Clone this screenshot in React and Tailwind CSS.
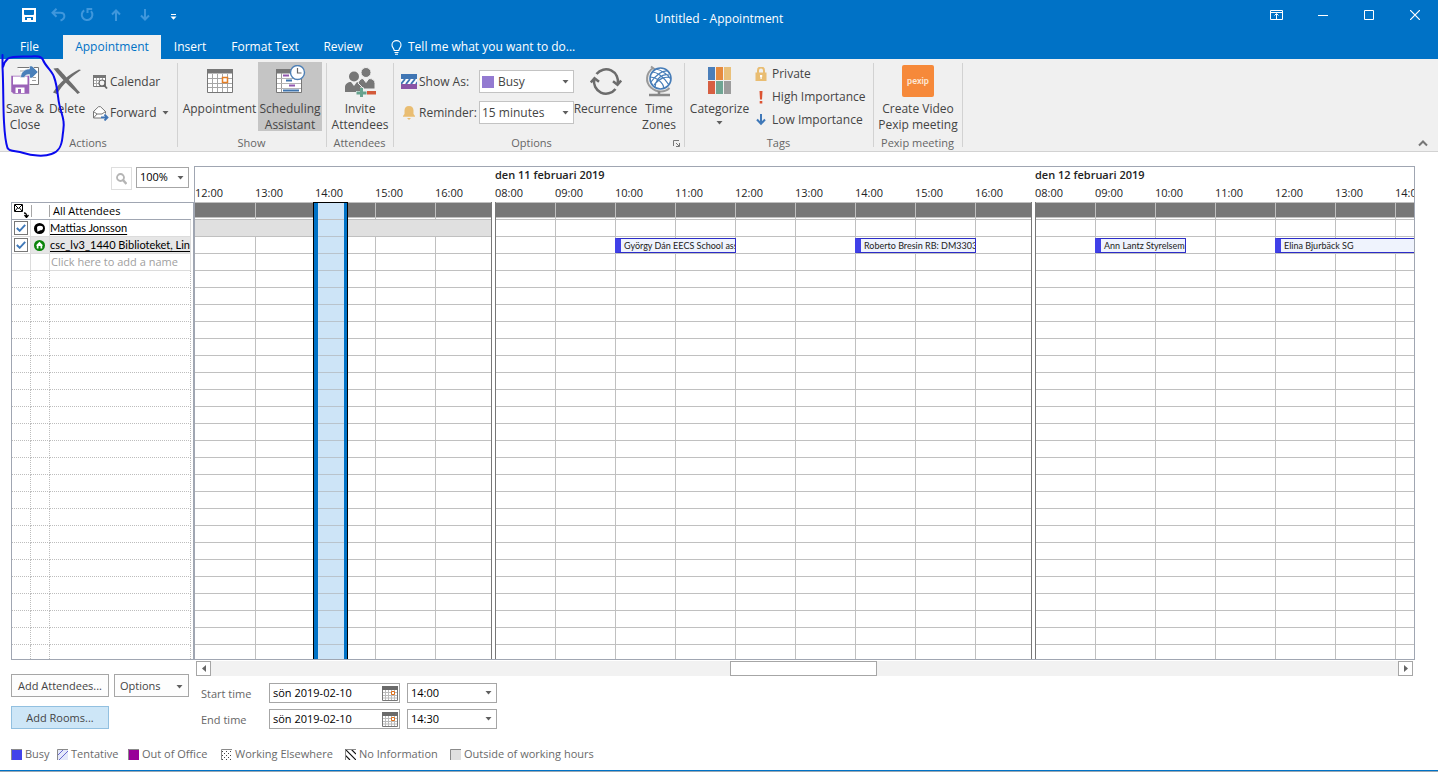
import { useState } from "react";

const HOUR_WIDTH = 60;
const ROWS = Array.from({ length: 26 }, (_, i) => i);

const days = [
  {
    label: "",
    hours: ["12:00", "13:00", "14:00", "15:00", "16:00"],
    offRow: 0,
    events: [],
  },
  {
    label: "den 11 februari 2019",
    hours: ["08:00", "09:00", "10:00", "11:00", "12:00", "13:00", "14:00", "15:00", "16:00"],
    events: [
      { title: "György Dán EECS School ass", start: 2, length: 2 },
      { title: "Roberto Bresin RB: DM3303", start: 6, length: 2 },
    ],
  },
  {
    label: "den 12 februari 2019",
    hours: ["08:00", "09:00", "10:00", "11:00", "12:00", "13:00", "14:00", "15:00", "16:00"],
    events: [
      { title: "Ann Lantz Styrelsem", start: 1, length: 1.5 },
      { title: "Elina Bjurbäck SG", start: 4, length: 4 },
    ],
  },
];

/* ------------------------------ Icons ------------------------------ */

const Caret = ({ className = "" }) => (
  <svg width="7" height="4" viewBox="0 0 7 4" className={className} aria-hidden="true">
    <path d="M0.5 0h6L3.5 3.5z" fill="#5f5f5f" />
  </svg>
);

const SaveIcon = () => (
  <svg width="14" height="14" viewBox="0 0 14 14" fill="#fff">
    <path fillRule="evenodd" d="M0 0h14v14H0zM2 2v4.5l1 .5h8l1-.5V2zM3 9v3h2v-2h4v2h2V9z" />
    <path d="M6 11h1.5v2H6z" />
  </svg>
);

const UndoIcon = () => (
  <svg width="15" height="14" viewBox="0 0 15 14" fill="none" stroke="#3f97dc" strokeWidth="2">
    <path d="M5.5 0.8 1.5 4.8l4 4M2 4.8h7.2c5.4 0 5.6 6 .3 7.7" />
  </svg>
);

const RedoIcon = () => (
  <svg width="14" height="14" viewBox="0 0 14 14" fill="none" stroke="#3f97dc" strokeWidth="2">
    <path d="M4.2 2.3A5.3 5.3 0 1 0 11 3.2M7.5 5V1h4.7" />
  </svg>
);

const ArrowIcon = ({ down }) => (
  <svg width="10" height="12" viewBox="0 0 10 12" fill="none" stroke="#3f97dc" strokeWidth="2">
    <path d={down ? "M5 0v10M1 6.5 5 10.5 9 6.5" : "M5 12V2M1 5.5 5 1.5 9 5.5"} />
  </svg>
);

const BulbIcon = () => (
  <svg width="11" height="15" viewBox="0 0 11 15" fill="none" stroke="#fff" strokeWidth="1.1">
    <path d="M3.2 10.5C3.2 8.5 1 7.500 1 4.900a4.500 4.300 0 0 1 9 0c0 2.600-2.200 3.600-2.200 5.600zM3.500 12.500h4M4 14.200h3" />
  </svg>
);

const SaveCloseIcon = () => (
  <svg width="32" height="32" viewBox="0 0 32 32">
    <path d="M8.500 2.500h21v17H20" fill="#fff" stroke="#777" />
    <path d="M11 6h5M23 12.500h4M23 15.500h4" stroke="#a0a0a0" />
    <path d="M2 10.500h18.500V29H4.500L2 26.500z" fill="#9b62b8" stroke="#f0f0f0" strokeWidth="0.500" />
    <path d="M4 11.500h14.500v8H4z" fill="#fff" />
    <path d="M6.500 22.500h9V28h-9z" fill="#fff" />
    <path d="M9 24h3v4H9z" fill="#9b62b8" />
    <path d="M11.500 12.500c.5-6 4.500-8.500 9-8.500V1H23l6 6-6 6h-2.500v-3.500c-3.500 0-4.500 1-5 3z" fill="#4a80ba" stroke="#f0f0f0" strokeWidth="0.6" />
  </svg>
);

const DeleteIcon = () => (
  <svg width="32" height="32" viewBox="0 0 32 32" fill="#6e6e6e">
    <path d="M2.500 3.500 7 3c5 5.500 9.500 10 22 24.500l-2.500 1.500C20 22 11 15 2.500 3.500z" />
    <path d="M30 5c-9 6-19 15-24 24L2 27.500C8 18 18 9 28 4.500z" />
  </svg>
);

const CalendarGrid = ({ x = 3, y = 4 }) => (
  <g transform={`translate(${x} ${y})`}>
    <path d="M.5.500h25v23H.500z" fill="#fff" stroke="#777" />
    <path d="M0 0h26v4.500H0z" fill="#777" />
    <path d="M5.500 5v18M10.500 5v18M15.500 5v18M20.500 5v18M1 9.500h24M1 14.500h24M1 18.500h24" stroke="#a6a6a6" />
  </g>
);

const AppointmentIcon = () => (
  <svg width="32" height="32" viewBox="0 0 32 32">
    <CalendarGrid />
    <path d="M18.500 12.500h5v5h-5z" fill="#fff" stroke="#e37e26" strokeWidth="1.500" />
  </svg>
);

const SchedulingIcon = () => (
  <svg width="32" height="32" viewBox="0 0 32 32">
    <path d="M2.500 4.500h25v23h-25z" fill="#fff" stroke="#777" />
    <path d="M2 4h26v4.500H2z" fill="#777" />
    <path d="M7.500 8v19" stroke="#999" />
    <path d="M3 13.500h24M3 18.500h24M3 23.500h24" stroke="#b4b4b4" />
    <path d="M9 10.500h6M15 20.500h6" stroke="#9157ae" strokeWidth="2" />
    <path d="M12 15.500h6M9 25.500h16" stroke="#3f74ad" strokeWidth="2" />
    <circle cx="23.500" cy="7.500" r="7" fill="#fff" stroke="#4e80b6" strokeWidth="1.400" />
    <path d="M23.500 3v5h4" fill="none" stroke="#666" strokeWidth="1.200" />
  </svg>
);

const SearchCalendarIcon = () => (
  <svg width="15" height="14" viewBox="0 0 15 14">
    <path d="M.5.500h12v11H.500z" fill="#fff" stroke="#777" />
    <path d="M0 0h13v3H0z" fill="#777" />
    <path d="M3.500 3v8M6.500 3v8M9.500 3v8M1 5.500h11M1 8.500h11" stroke="#aaa" />
    <circle cx="9" cy="8" r="3" fill="#f4f4f4" stroke="#666" strokeWidth="1.200" />
    <path d="m11 10 3 3.500" stroke="#666" strokeWidth="1.800" />
  </svg>
);

const ForwardIcon = () => (
  <svg width="16" height="15" viewBox="0 0 16 15">
    <path d="M.5 5.500 5.500.700h2l5 4.800V12H.500z" fill="#fff" stroke="#777" />
    <path d="m.5 5.500 3.500 2.500h5l3.500-2.500M.5 12l3.500-4" fill="none" stroke="#777" />
    <path d="M8 11.500h6M11.500 8.500l3 3-3 3" fill="none" stroke="#f0f0f0" strokeWidth="3.500" />
    <path d="M8 11.500h6M11.500 8.500l3 3-3 3" fill="none" stroke="#3f74b5" strokeWidth="1.800" />
  </svg>
);

const InviteIcon = () => (
  <svg width="32" height="32" viewBox="0 0 32 32">
    <circle cx="10" cy="11.500" r="5" fill="#777" />
    <path d="M1 27v-5c0-3 3-5 6-5l3 4 3-4c3 0 6 2 6 5v5z" fill="#777" />
    <circle cx="22" cy="7.500" r="5" fill="#777" stroke="#f0f0f0" />
    <path d="M14 18c1-3 3-4.500 5-4.500l3 4 3-4c4 0 6 2 6 5V24H20z" fill="#777" stroke="#f0f0f0" />
    <path d="M16 22.500h4V26h3.500v3.500H20V33h-4v-3.500h-4V26h4z" fill="#f0f0f0" />
    <path d="M16 23h3v3.500h3.500v3H19V32h-3v-2.500h-3.500v-3H16z" fill="#66a28e" />
    <path d="M23 26h9v3.500h-9z" fill="#d35a3a" />
  </svg>
);

const ShowAsIcon = () => (
  <svg width="16" height="15" viewBox="0 0 16 15">
    <path d="M0 0h16v5H0z" fill="#4076b4" />
    <path d="M0 5h16v5H0z" fill="#fff" />
    <path d="m0 10 4-5M5 10l4-5M10 10l4-5M15 10l4-5" stroke="#4076b4" strokeWidth="2" />
    <path d="M0 10h16v5H0z" fill="#8a54a5" />
  </svg>
);

const BellIcon = () => (
  <svg width="14" height="14" viewBox="0 0 14 14" fill="#e9bd72">
    <path d="M7 0c3 0 4.500 2 4.500 4.500V8l1.500 2v.800H1V10l1.500-2V4.500C2.500 2 4 0 7 0zM5 12h4l-2 2z" />
  </svg>
);

const RecurrenceIcon = () => (
  <svg width="32" height="32" viewBox="0 0 32 32" fill="none" stroke="#6c6c6c" strokeWidth="2.500">
    <path d="M25.500 24A12 12 0 0 1 4.300 14M6.500 9A12 12 0 0 1 27.700 19" />
    <path d="m.8 17.500 3.700-4.300 4.500 3.500M31.200 15.500l-3.700 4.300-4.500-3.500" />
  </svg>
);

const GlobeIcon = () => (
  <svg width="32" height="32" viewBox="0 0 32 32" fill="none">
    <path d="M10 3C3 8 2 17 8 22.500s14 5 18.500.500M8 1.500l4 3" stroke="#999" strokeWidth="2" />
    <path d="M16 26v3M6 30h21" stroke="#888" strokeWidth="2.500" />
    <circle cx="17.500" cy="13.500" r="10.500" fill="#fff" stroke="#477db8" strokeWidth="1.600" />
    <path d="M9 7c5 0 12 5 17 13M8 17C14 9 19 5 25 6M7 12c6 0 13 5 14 11.500M12 22c1-8 7-14 14-12M13 4c6 1 13 7 14.500 10M11 20c5-7 12-9 17-7" stroke="#477db8" strokeWidth="1.200" />
  </svg>
);

const CategorizeIcon = () => (
  <svg width="24" height="32" viewBox="0 0 24 32">
    <path d="M0 2h7v13H0z" fill="#4a7eb9" />
    <path d="M8 2h7v13H8z" fill="#e58a3e" />
    <path d="M16 2h7v13h-7z" fill="#e9c07a" />
    <path d="M0 16h7v13H0z" fill="#d65f42" />
    <path d="M8 16h7v13H8z" fill="#6fa593" />
    <path d="M16 16h7v13h-7z" fill="#9c9c9c" />
  </svg>
);

const LockIcon = () => (
  <svg width="12" height="14" viewBox="0 0 12 14">
    <path d="M3 6V3.500a3 3 0 0 1 6 0V6" fill="none" stroke="#e9bd72" strokeWidth="2" />
    <path d="M.5 5.500h11V14H.500z" fill="#e9bd72" />
    <path d="M5 8h2.200v1.800l-.5.500V12h-1.200v-1.700L5 9.800z" fill="#fff" />
  </svg>
);

const ExclamationIcon = () => (
  <svg width="12" height="13" viewBox="0 0 12 13" fill="#dc5332">
    <path d="M4.500 0h3L7 8.500H5zM4.700 10h2.600v2.500H4.700z" />
  </svg>
);

const LowIcon = () => (
  <svg width="12" height="12" viewBox="0 0 12 12" fill="none" stroke="#3f78b8" strokeWidth="2">
    <path d="M6 0v10M2 5.500 6 9.800l4-4.300" />
  </svg>
);

const PexipIcon = () => (
  <svg width="32" height="32" viewBox="0 0 32 32">
    <rect width="32" height="32" rx="2" fill="#f6893a" />
    <text x="16" y="18.500" textAnchor="middle" fontSize="9" fontWeight="600" fontFamily="Roboto, sans-serif" fill="#fde6d4">
      pexip
    </text>
  </svg>
);

const SmallCalendarIcon = () => (
  <svg width="16" height="15" viewBox="0 0 16 15">
    <path d="M.5.500h15v14H.500z" fill="#fff" stroke="#777" />
    <path d="M0 0h16v4H0z" fill="#6a6a6a" />
    <path d="M3.500 4v10M6.500 4v10M9.500 4v10M12.500 4v10M1 6.500h14M1 9.500h14M1 12h14" stroke="#bbb" />
    <path d="M9.500 5.500h3v3h-3z" fill="#fff" stroke="#e0701a" />
  </svg>
);

const EnvelopeIcon = () => (
  <svg width="15" height="14" viewBox="0 0 15 14" fill="none" stroke="#000">
    <path d="M.5.500h8v7h-8zM1 1l3.500 3.500L8 1M1 7l2.500-3M8 7 5.500 4" />
    <path d="M10 9c2 0 2.500.500 2.500 3.500M10.500 11l2 2.500 2-2.500" strokeWidth="1.300" />
  </svg>
);

const OrganizerIcon = () => (
  <svg width="11" height="11" viewBox="0 0 11 11">
    <circle cx="5.500" cy="5.500" r="5.500" fill="#000" />
    <ellipse cx="6" cy="5" rx="3" ry="2.300" fill="#fff" />
    <path d="M3.300 5.500v3.200l3-1.500z" fill="#fff" />
  </svg>
);

const HouseIcon = () => (
  <svg width="11" height="11" viewBox="0 0 11 11">
    <circle cx="5.500" cy="5.500" r="5.500" fill="#0b850b" />
    <path d="M5.500 1.800 9.200 5.500H8.200V8.500H6.500V6h-2v2.500H2.800V5.500H1.800z" fill="#fff" />
  </svg>
);

/* ------------------------------ Ribbon ------------------------------ */

const Group = ({ label, className = "", labelClass = "pr-0.5", children }) => (
  <section className="relative flex shrink-0 flex-col" aria-label={label}>
    <div className={`flex h-[73px] items-start ${className}`}>{children}</div>
    <div className={`h-4 text-center text-[11px] leading-4 text-[#666] ${labelClass}`}>{label}</div>
    <span className="absolute right-0 top-px bottom-1 w-px bg-[#d2d2d2]" />
  </section>
);

const BigButton = ({ icon, lines, className = "" }) => (
  <button type="button" className={`flex h-[69px] shrink-0 flex-col items-center pt-[3px] ${className}`}>
    <span className="flex h-9 shrink-0 items-start">{icon}</span>
    {lines.map((line) => (
      <span key={line} className="block shrink-0 whitespace-nowrap leading-4">
        {line}
      </span>
    ))}
  </button>
);

const SmallButton = ({ icon, children, className = "" }) => (
  <button type="button" className={`flex items-center whitespace-nowrap ${className}`}>
    {icon}
    {children}
  </button>
);

const Select = ({ id, label, options, className = "", children }) => (
  <div className="relative flex items-center">
    {children}
    <select
      id={id}
      aria-label={label}
      className={`appearance-none rounded-none border bg-white outline-none ${className}`}
    >
      {options.map((option) => (
        <option key={option}>{option}</option>
      ))}
    </select>
    <Caret className="pointer-events-none absolute right-[5px]" />
  </div>
);

const Ribbon = () => (
  <div className="relative flex border-b border-[#d2d2d2] bg-[#f0f0f0] pt-[3px] text-[12px] text-[#444]">
    <Group label="Actions" className="w-[178px] pl-px">
      <BigButton className="w-12" icon={<SaveCloseIcon />} lines={["Save &", "Close"]} />
      <BigButton className="w-9" icon={<DeleteIcon />} lines={["Delete"]} />
      <div className="flex flex-col gap-[15px] pl-2 pt-3">
        <SmallButton className="h-4 gap-[2px]" icon={<SearchCalendarIcon />}>
          Calendar
        </SmallButton>
        <SmallButton className="h-4 gap-px" icon={<ForwardIcon />}>
          Forward
          <Caret className="ml-1" />
        </SmallButton>
      </div>
    </Group>

    <Group label="Show" className="w-[149px] pl-[3px]">
      <BigButton className="w-[77px]" icon={<AppointmentIcon />} lines={["Appointment"]} />
      <BigButton className="w-16 bg-[#c5c5c5]" icon={<SchedulingIcon />} lines={["Scheduling", "Assistant"]} />
    </Group>

    <Group label="Attendees" className="w-[67px]">
      <BigButton className="w-[66px]" icon={<InviteIcon />} lines={["Invite", "Attendees"]} />
    </Group>

    <Group label="Options" className="w-[291px] pl-[7px]" labelClass="pr-4">
      <div className="flex flex-col gap-2 pt-2">
        <div className="flex h-[23px] items-center">
          <label htmlFor="show-as" className="flex w-[78px] items-center gap-0.5 whitespace-nowrap">
            <ShowAsIcon />
            Show As:
          </label>
          <Select id="show-as" options={["Busy", "Free", "Tentative"]} className="h-[23px] w-[95px] border-[#c3c3c3] pl-[18px]">
            <span className="pointer-events-none absolute left-[3px] size-3 bg-[#937ad1]" />
          </Select>
        </div>
        <div className="flex h-[23px] items-center">
          <label htmlFor="reminder" className="flex w-[78px] items-center gap-0.5 whitespace-nowrap">
            <span className="flex w-4 justify-center">
              <BellIcon />
            </span>
            Reminder:
          </label>
          <Select
            id="reminder"
            options={["15 minutes", "30 minutes"]}
            className="h-[23px] w-[95px] border-[#c3c3c3] pl-0.5"
          />
        </div>
      </div>
      <BigButton className="w-[63px]" icon={<RecurrenceIcon />} lines={["Recurrence"]} />
      <BigButton className="w-11" icon={<GlobeIcon />} lines={["Time", "Zones"]} />
      <button type="button" aria-label="More options" className="absolute right-[5px] bottom-1">
        <svg width="7" height="7" viewBox="0 0 7 7" fill="none" stroke="#777">
          <path d="M.5 6V.500H6M3 3l3 3M6.500 3v3.500H3" />
        </svg>
      </button>
    </Group>

    <Group label="Tags" className="w-[189px] pl-[3px]">
      <div className="relative">
        <BigButton className="w-[63px]" icon={<CategorizeIcon />} lines={["Categorize"]} />
        <Caret className="absolute bottom-1.5 left-7" />
      </div>
      <div className="flex flex-col gap-[7px] pl-1 pt-1">
        <SmallButton className="h-4 gap-[5px]" icon={<LockIcon />}>
          Private
        </SmallButton>
        <SmallButton className="h-4 gap-[5px]" icon={<ExclamationIcon />}>
          High Importance
        </SmallButton>
        <SmallButton className="h-4 gap-[5px]" icon={<LowIcon />}>
          Low Importance
        </SmallButton>
      </div>
    </Group>

    <Group label="Pexip meeting" className="w-[89px]">
      <BigButton className="w-[88px]" icon={<PexipIcon />} lines={["Create Video", "Pexip meeting"]} />
    </Group>

    <button type="button" aria-label="Collapse ribbon" className="ml-auto mr-2.5 mb-1 self-end">
      <svg width="10" height="7" viewBox="0 0 10 7" fill="none" stroke="#777" strokeWidth="2">
        <path d="m1 5.500 4-4 4 4" />
      </svg>
    </button>
  </div>
);

const TitleBar = () => (
  <header className="bg-[#0072c6] text-[12px] text-white">
    <div className="grid h-[35px] grid-cols-[1fr_auto_1fr]">
      <div className="flex h-[30px] items-center pl-[22px]">
        <button type="button" aria-label="Save" className="w-[29px]"><SaveIcon /></button>
        <button type="button" aria-label="Undo" className="w-[29px]"><UndoIcon /></button>
        <button type="button" aria-label="Redo" className="w-[31px]"><RedoIcon /></button>
        <button type="button" aria-label="Previous item" className="w-[29px]"><ArrowIcon /></button>
        <button type="button" aria-label="Next item" className="w-[30px]"><ArrowIcon down /></button>
        <button type="button" aria-label="Customize toolbar" className="pt-1">
          <svg width="7" height="6" viewBox="0 0 7 6" fill="#fff">
            <path d="M1 0h5v1H1zM.500 2.500h6L3.500 5.800z" />
          </svg>
        </button>
      </div>
      <h1 className="pt-[11px] leading-4">Untitled - Appointment</h1>
      <div className="flex h-[30px] items-center justify-end pr-[18px]">
        <button type="button" aria-label="Ribbon display options" className="w-12">
          <svg width="13" height="10" viewBox="0 0 13 10" fill="none" stroke="#fff">
            <path d="M.5.500h12v9H.500zM1 2.500h11M6.500 9V4M4.500 5.500l2-2 2 2" />
          </svg>
        </button>
        <button type="button" aria-label="Minimize" className="w-[46px]">
          <svg width="10" height="10" viewBox="0 0 10 10"><path d="M0 5.500h10" stroke="#fff" /></svg>
        </button>
        <button type="button" aria-label="Maximize" className="w-[46px]">
          <svg width="10" height="10" viewBox="0 0 10 10"><path d="M.5.500h9v9h-9z" fill="none" stroke="#fff" /></svg>
        </button>
        <button type="button" aria-label="Close">
          <svg width="10" height="10" viewBox="0 0 10 10"><path d="m0 0 10 10M10 0 0 10" stroke="#fff" strokeWidth="1.200" /></svg>
        </button>
      </div>
    </div>
    <nav className="flex h-6 items-stretch whitespace-nowrap">
      <a href="#file" className="flex w-[63px] items-center pl-5">File</a>
      <a href="#appointment" className="flex w-[98px] items-center justify-center bg-[#f0f0f0] text-[#0072c6]">
        Appointment
      </a>
      <a href="#insert" className="flex w-[58px] items-center justify-center">Insert</a>
      <a href="#format" className="flex w-[92px] items-center justify-center">Format Text</a>
      <a href="#review" className="flex w-[64px] items-center justify-center">Review</a>
      <button type="button" className="flex items-center gap-1.5 pl-4">
        <BulbIcon />
        Tell me what you want to do...
      </button>
    </nav>
  </header>
);

/* ------------------------------ Schedule ------------------------------ */

const attendees = [
  { name: "Mattias Jonsson", icon: <OrganizerIcon /> },
  { name: "csc_lv3_1440 Biblioteket, Lind", icon: <HouseIcon />, shaded: true },
];

const AttendeeCheck = ({ name }) => {
  const [checked, setChecked] = useState(true);
  return (
    <span className="relative mx-auto flex size-[14px] items-center justify-center">
      <input
        type="checkbox"
        aria-label={name}
        checked={checked}
        onChange={() => setChecked(!checked)}
        className="size-[14px] appearance-none border border-[#777] bg-white"
      />
      {checked && (
        <svg width="10" height="8" viewBox="0 0 10 8" className="pointer-events-none absolute">
          <path d="m.8 4 2.900 2.800L9.200.800" fill="none" stroke="#3f78b8" strokeWidth="1.900" />
        </svg>
      )}
    </span>
  );
};

const AttendeeList = () => (
  <div className="w-[183px] shrink-0 border border-[#a0a6b2] text-[11px] text-black">
    <table className="w-[179px] table-fixed border-separate border-spacing-0">
      <thead>
        <tr>
          <th className="h-[17px] w-[19px] border-b border-[#a0a6b2] p-0">
            <span className="flex h-4 items-center pl-0.5"><EnvelopeIcon /></span>
          </th>
          <th className="w-[19px] border-b border-[#a0a6b2] p-0">
            <span className="block h-3 border-r border-l border-[#a6a6a6]" />
          </th>
          <th className="border-b border-[#a0a6b2] p-0 pl-[3px] text-left font-normal leading-4">All Attendees</th>
        </tr>
      </thead>
      <tbody>
        {attendees.map((person) => (
          <tr key={person.name} className={person.shaded ? "bg-[#e6e6e6]" : ""}>
            <td className="h-[17px] border-r border-b border-[#dcdcdc] bg-white p-0">
              <AttendeeCheck name={person.name} />
            </td>
            <td className="border-r border-b border-[#dcdcdc] p-0">
              <span className="flex h-4 items-center justify-center pr-0.5">{person.icon}</span>
            </td>
            <td className="border-r border-b border-[#dcdcdc] p-0">
              <a
                href="#attendee"
                className="block h-4 overflow-hidden whitespace-nowrap font-['Lato','Noto_Sans',sans-serif] leading-4 underline underline-offset-2"
              >
                {person.name}
              </a>
            </td>
          </tr>
        ))}
        <tr>
          <td className="h-[17px] border-r border-b border-[#dcdcdc] p-0" />
          <td className="border-r border-b border-[#dcdcdc] p-0" />
          <td className="border-r border-b border-[#dcdcdc] p-0 pl-px leading-4 text-[#a0a0a0]">Click here to add a name</td>
        </tr>
        {ROWS.slice(3, 25).map((row) => (
          <tr key={row}>
            <td className="h-[17px] border-r border-b border-dotted border-[#bdbdbd] p-0" />
            <td className="border-r border-b border-dotted border-[#bdbdbd] p-0" />
            <td className="border-r border-b border-dotted border-[#bdbdbd] p-0" />
          </tr>
        ))}
        <tr>
          <td className="h-[14px] border-r border-dotted border-[#bdbdbd] p-0" />
          <td className="border-r border-dotted border-[#bdbdbd] p-0" />
          <td className="border-r border-dotted border-[#bdbdbd] p-0" />
        </tr>
      </tbody>
    </table>
  </div>
);

const Day = ({ day, first }) => (
  <div className="shrink-0">
    <div className="h-[35px]">
      <div className="h-[17px] text-[11px] leading-4 font-semibold">{day.label}</div>
      <div className="flex">
        {day.hours.map((hour) => (
          <span key={hour} className="w-[60px] text-[11px] leading-[18px]">{hour}</span>
        ))}
      </div>
    </div>

    <div className="relative pr-[3px]">
      <div className={`border-r border-[#777] ${first ? "" : "border-l"}`}>
        <div className="h-4 border-t border-b border-[#c0c0c0] bg-[#777]" />
        <div className="h-0.5 border-b border-[#c0c0c0]" />
        {ROWS.map((row) => (
          <div
            key={row}
            className={`${row === 25 ? "h-[14px]" : "h-[17px] border-b border-[#c0c0c0]"} ${
              day.offRow === row ? "relative z-10 bg-[#e0e0e0]" : ""
            }`}
          />
        ))}
      </div>

      {/* Hour lines */}
      {day.hours.slice(1).map((hour, i) => (
        <span
          key={hour}
          className="absolute inset-y-0 w-px bg-[#c0c0c0]"
          style={{ left: (i + 1) * HOUR_WIDTH }}
        />
      ))}

      {day.events.map((event) => (
        <div
          key={event.title}
          className="absolute top-9 h-[15px] overflow-hidden rounded-[1px] border border-l-[6px] border-[#2c2cc8] border-l-[#4040e8] bg-[#eff3fd] pl-[3px] font-['Lato','Noto_Sans',sans-serif] text-[9px] leading-[13px] whitespace-nowrap text-[#222]"
          style={{ left: event.start * HOUR_WIDTH, width: event.length * HOUR_WIDTH + 1 }}
        >
          {event.title}
        </div>
      ))}
    </div>
  </div>
);

const Timeline = () => (
  <div className="relative flex min-w-0 flex-1 overflow-hidden border border-[#a0a6b2] text-[#222]">
    {days.map((day, i) => (
      <Day key={i} day={day} first={i === 0} />
    ))}

    {/* Selected meeting time */}
    <div className="absolute top-[35px] bottom-0 left-[118px] z-20 flex w-[35px] flex-col border-x border-t border-black bg-[#cde4f7]">
      <div className="h-[17px] border-b border-[#c0c0c0]" />
      {ROWS.slice(0, 25).map((row) => (
        <div key={row} className="h-[17px] border-b border-[#b9c3cc]" />
      ))}
      <span className="absolute inset-y-0 left-0 w-1 bg-[#0072c6]" />
      <span className="absolute inset-y-0 right-0 w-[3px] bg-[#0072c6]" />
    </div>
  </div>
);

const ScrollBar = () => (
  <div className="mr-0.5 ml-0.5 flex h-[15px] bg-[#f2f2f2]">
    <button type="button" aria-label="Scroll left" className="flex w-[15px] items-center justify-center border border-[#a6a6a6] bg-white">
      <svg width="4" height="7" viewBox="0 0 4 7"><path d="M4 0v7L0 3.500z" fill="#666" /></svg>
    </button>
    <span className="flex-[519]" />
    <span className="w-[147px] border border-[#a6a6a6] bg-white" />
    <span className="flex-[521]" />
    <button type="button" aria-label="Scroll right" className="flex w-[15px] items-center justify-center border border-[#a6a6a6] bg-white">
      <svg width="4" height="7" viewBox="0 0 4 7"><path d="M0 0v7l4-3.500z" fill="#666" /></svg>
    </button>
  </div>
);

const TimeRow = ({ id, label, time }) => (
  <div className="flex h-5 items-center">
    <label htmlFor={id} className="w-[75px] pl-[7px] pt-0.5 text-[#666]">{label}</label>
    <div className="relative flex items-center">
      <input
        id={id}
        type="text"
        defaultValue="sön 2019-02-10"
        className="h-5 w-[131px] border border-[#a6a6a6] bg-white pb-0.5 pl-[3px] text-black outline-none"
      />
      <button type="button" aria-label={`Pick ${label}`} className="absolute right-0.5">
        <SmallCalendarIcon />
      </button>
    </div>
    <div className="w-[7px]" />
    <Select id={`${id}-hour`} label={label} options={[time]} className="h-5 w-[90px] border-[#a6a6a6] pl-[3px] text-black" />
  </div>
);

/* ------------------------------ Legend ------------------------------ */

const legend = [
  { label: "Busy", width: "w-[46px]", fill: <path d="M0 0h11v11H0z" fill="#4343ea" /> },
  {
    label: "Tentative",
    width: "w-[71px]",
    fill: (
      <>
        <path d="M0 0h11v11H0z" fill="#e4e8fa" />
        <path d="m0 7 7-7M2 11l9-9" stroke="#6868d0" />
      </>
    ),
  },
  { label: "Out of Office", width: "w-[93px]", fill: <path d="M0 0h11v11H0z" fill="#990099" /> },
  {
    label: "Working Elsewhere",
    width: "w-[124px]",
    fill: (
      <path
        d="M1 2.500h10M1 6.500h10M1 10.500h10M3 4.500h8M3 8.500h8"
        stroke="#444"
        strokeDasharray="1 3"
      />
    ),
  },
  { label: "No Information", width: "w-[105px]", fill: <path d="m0 0 11 11M0 6l5 5M6 0l5 5" stroke="#111" strokeWidth="1.200" /> },
  { label: "Outside of working hours", width: "w-[160px]", fill: <path d="M0 0h11v11H0z" fill="#e0e0e0" /> },
];

const Legend = () => (
  <ul className="mt-[17px] flex pl-[11px] text-[11px] leading-4 text-[#6a6a6a]">
    {legend.map((item) => (
      <li key={item.label} className={`flex shrink-0 items-center gap-[3px] whitespace-nowrap ${item.width}`}>
        <svg width="11" height="11" viewBox="0 0 11 11">
          {item.fill}
          <path d="M.5 11V.500H11" fill="none" stroke="#8a8a8a" />
        </svg>
        {item.label}
      </li>
    ))}
  </ul>
);

const App = () => (
  <div className="relative flex min-h-screen flex-col overflow-hidden bg-white font-['Open_Sans','Noto_Sans',sans-serif]">
    <TitleBar />
    <Ribbon />

    <main className="flex flex-1 flex-col pt-3.5">
      <div className="flex pr-[23px] pl-[11px]">
        <div className="shrink-0">
          <div className="flex h-9 justify-end pt-px pr-[5px] text-[11px]">
            <button type="button" aria-label="Zoom" className="flex h-[23px] w-[21px] items-center justify-center border border-[#dedede]">
              <svg width="11" height="12" viewBox="0 0 11 12" fill="none" stroke="#b5b5b5">
                <circle cx="4.500" cy="4.500" r="3.500" strokeWidth="1.800" />
                <path d="m7 7 3.500 4" strokeWidth="2.500" />
              </svg>
            </button>
            <div className="ml-1">
              <Select label="Zoom level" options={["100%", "50%"]} className="h-[21px] w-[53px] border-[#a6a6a6] pl-[3px] text-black" />
            </div>
          </div>
          <AttendeeList />
        </div>
        <Timeline />
      </div>

      <div className="flex pr-[23px] pl-[11px]">
        <div className="flex w-[183px] shrink-0 flex-col gap-[9px] pt-3.5 text-[11px] text-[#444]">
          <div className="flex gap-[5px]">
            <button type="button" className="h-[23px] w-[98px] border border-[#a6a6a6] bg-[#fdfdfd] pt-0.5">Add Attendees...</button>
            <button type="button" className="flex h-[23px] w-[75px] items-center justify-between border border-[#a6a6a6] bg-[#fdfdfd] px-[5px] pt-0.5">
              Options
              <Caret />
            </button>
          </div>
          <button type="button" className="h-[23px] w-[98px] border border-[#92c0e0] bg-[#cde6f7] pt-0.5">Add Rooms...</button>
        </div>
        <div className="min-w-0 flex-1 pt-px">
          <ScrollBar />
          <div className="mt-[7px] flex flex-col gap-1.5 text-[11px]">
            <TimeRow id="start" label="Start time" time="14:00" />
            <TimeRow id="end" label="End time" time="14:30" />
          </div>
        </div>
      </div>

      <Legend />
    </main>

    <footer className="h-0.5 border-t border-[#0072c6] bg-[#9aa7b3]" />

    {/* Pen mark around Save & Close */}
    <svg width="68" height="104" viewBox="0 0 68 104" className="pointer-events-none absolute top-[54px] left-0" fill="none">
      <path
        d="M2.500 1v12C3.500 30 3 50 4 68c.500 9 1.500 20 3.500 26 2 4 8 2.500 16 5s20 4 28 1c7-2 10-7 11-17 .500-7 2-10 1-16-1-7-4-13-5-21s-2-17-4.500-23C52 17 46 13 43 6c-2-5-9-3.500-15-3.500-8 0-16-.500-20 2C5 7 4 9 3 13"
        stroke="#0a0aee"
        strokeWidth="2"
        strokeLinecap="round"
        strokeLinejoin="round"
      />
    </svg>
  </div>
);

export default App;
